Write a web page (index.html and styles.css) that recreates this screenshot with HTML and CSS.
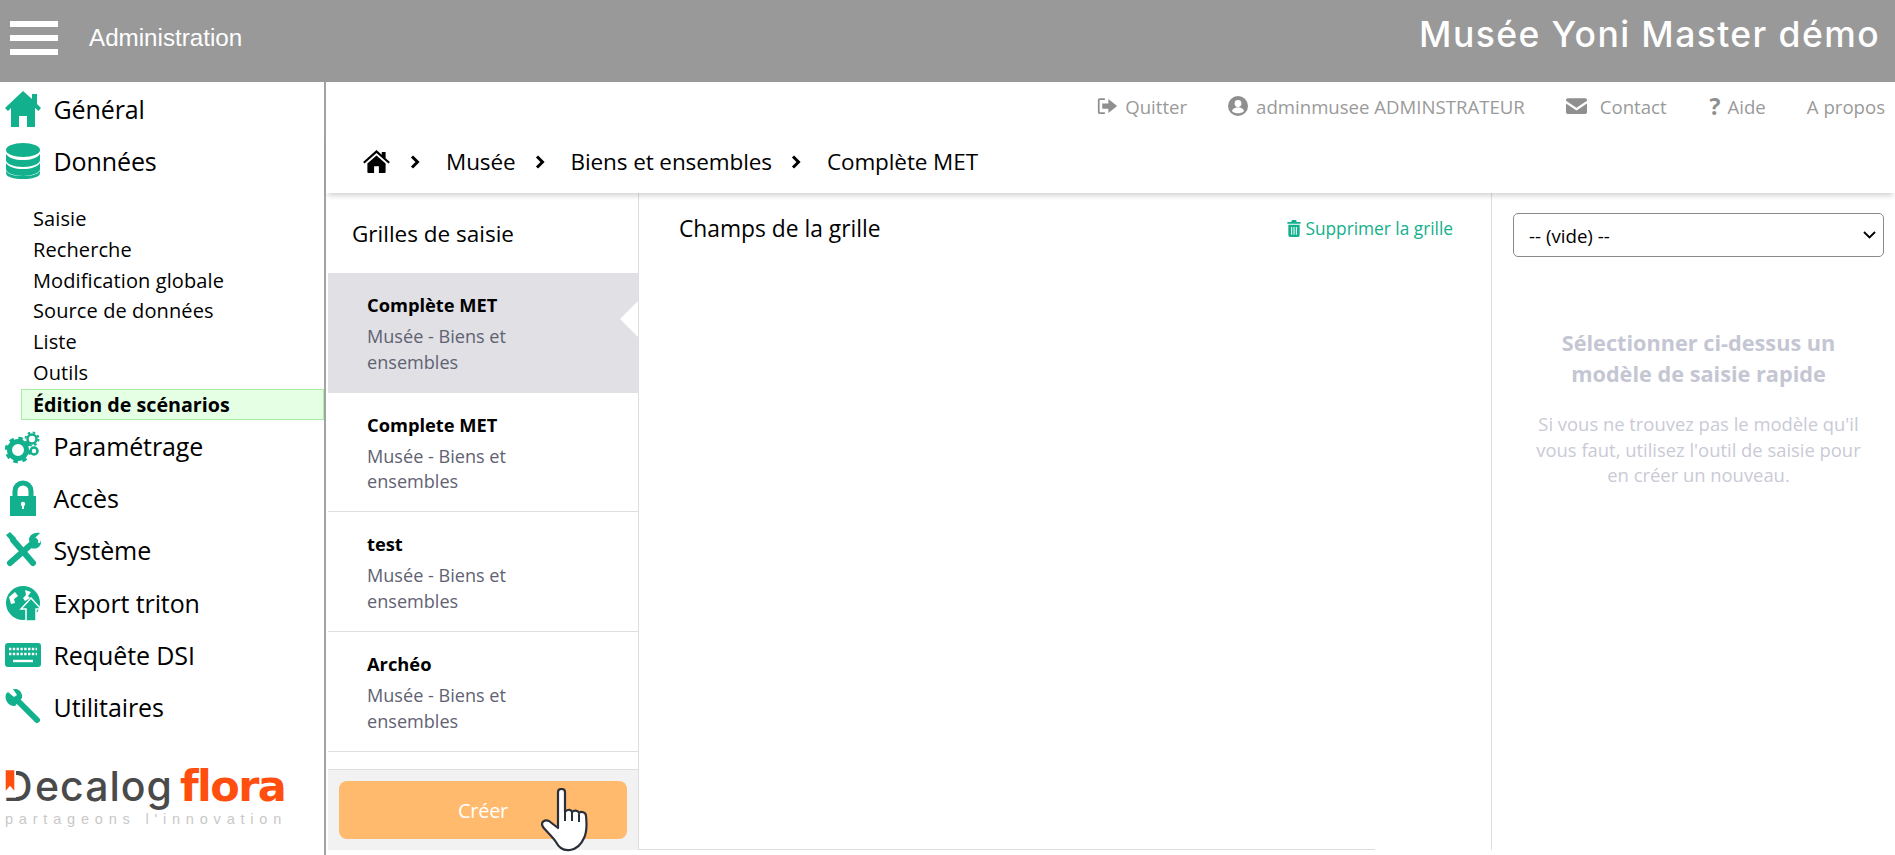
FILE: index.html
```html
<!DOCTYPE html>
<html lang="fr">
<head>
<meta charset="utf-8">
<title>Musée Yoni Master démo</title>
<link rel="stylesheet" href="styles.css">
</head>
<body>
<header class="topbar">
  <div class="burger"><span></span><span></span><span></span></div>
  <div class="admin">Administration</div>
  <div class="brand">Musée Yoni Master démo</div>
</header>
<div class="app">
  <aside class="side">
    <nav class="nav">
      <a class="nav-item"><svg class="ni" viewBox="0 0 36 36"><path d="M18 0l9 8V3h5v10l4 4-2.500 3L30 17v19h-8V25h-8v11H6V17l-3 3-3-3z"/></svg>Général</a>
      <a class="nav-item"><svg class="ni" viewBox="0 0 36 36"><ellipse cx="18" cy="7" rx="17" ry="7"/><path d="M1 11c3 4 9 6 17 6s14-2 17-6v6c0 4-8 7-17 7S1 21 1 17zM1 20c3 4 9 6 17 6s14-2 17-6v6c0 4-8 7-17 7S1 30 1 26z"/><path d="M1 28c3 4 9 5 17 5s14-1 17-5v2c0 4-8 6-17 6S1 34 1 30z"/></svg>Données</a>
      <ul class="sub">
        <li>Saisie</li>
        <li>Recherche</li>
        <li>Modification globale</li>
        <li>Source de données</li>
        <li>Liste</li>
        <li>Outils</li>
        <li class="on">Édition de scénarios</li>
      </ul>
      <a class="nav-item"><svg class="ni" viewBox="0 0 36 36"><circle cx="13" cy="22" r="8.500" fill="none" stroke="#12b08c" stroke-width="5"/><circle cx="13" cy="22" r="11.500" fill="none" stroke="#12b08c" stroke-width="3.500" stroke-dasharray="4.500 4.530"/><circle cx="27" cy="11" r="4.500" fill="none" stroke="#12b08c" stroke-width="2.500"/><circle cx="27" cy="11" r="6.500" fill="none" stroke="#12b08c" stroke-width="2" stroke-dasharray="2.500 2.600"/><circle cx="29" cy="23" r="3.500" fill="none" stroke="#12b08c" stroke-width="2.500"/></svg>Paramétrage</a>
      <a class="nav-item"><svg class="ni" viewBox="0 0 36 36"><path d="M10 17v-6a8 8 0 0 1 16 0v6" fill="none" stroke="#12b08c" stroke-width="5"/><path d="M5 16h26v20H5z"/><circle cx="18" cy="24" r="2.200" fill="#fff"/><path d="M17 24h2v5h-2z" fill="#fff"/></svg>Accès</a>
      <a class="nav-item"><svg class="ni" viewBox="0 0 36 36"><path d="M5 31L30 9" stroke="#12b08c" stroke-width="6" stroke-linecap="round"/><path d="M8 8l20 23" stroke="#12b08c" stroke-width="6" stroke-linecap="round"/><path d="M24 8c0-5 5-8 11-7l-5 5 1 4 4 1 1-3c1 6-4 10-10 8zM1 3l4-3 6 6-4 4z"/></svg>Système</a>
      <a class="nav-item"><svg class="ni" viewBox="0 0 36 36"><circle cx="18" cy="18" r="17"/><path d="M4 12l6-5 3 4-4 3 1 4-4 1zM20 5l6 2-3 4 2 2-5 3-2-3 3-3z" fill="#fff"/><path d="M26 13l10 11h-5v12H21V24h-5z" stroke="#fff" stroke-width="1.500"/></svg>Export triton</a>
      <a class="nav-item"><svg class="ni" viewBox="0 0 36 36"><rect y="6" width="36" height="24" rx="3"/><path d="M4 12h28M4 17h28" stroke="#fff" stroke-width="2.400" stroke-dasharray="2.400 1.400"/><path d="M8 24h20" stroke="#fff" stroke-width="2.400"/></svg>Requête DSI</a>
      <a class="nav-item"><svg class="ni" viewBox="0 0 36 36"><path d="M13 12l19 19" stroke="#12b08c" stroke-width="6" stroke-linecap="round"/><path d="M3 3l6 5 3-2-4-6c5-1 10 3 9 9l-7 8C4 18-1 11 1 5z"/></svg>Utilitaires</a>
    </nav>
    <div class="logo">
      <div class="logo-row">
        <span class="logo-d">D<svg class="logo-flag" viewBox="0 0 14 32"><path d="M0 0h14v32H0z" fill="#fff"/><path d="M2 0h10v24L7 18 2 24z" fill="#ff4e0d"/></svg></span><span class="logo-rest">ecalog</span><span class="logo-flora">flora</span>
      </div>
      <div class="logo-tag">partageons l'innovation</div>
    </div>
  </aside>

  <main class="main">
    <div class="links">
      <a class="lnk"><svg class="li" viewBox="0 0 24 20"><path d="M9 1H3a2 2 0 0 0-2 2v14a2 2 0 0 0 2 2h6v-2H3V3h6z"/><path d="M13 2l10 8-10 8v-5H6V7h7z"/></svg>Quitter</a>
      <a class="lnk"><svg class="li li-u" viewBox="0 0 20 20"><circle cx="10" cy="10" r="10"/><circle cx="10" cy="7.500" r="3.400" fill="#fff"/><path d="M4 15.200c1-3 3-4 6-4s5 1 6 4c-3.300 2.800-8.700 2.800-12 0z" fill="#fff"/></svg>adminmusee ADMINSTRATEUR</a>
      <a class="lnk lnk-c"><svg class="li li-m" viewBox="0 0 24 18"><path d="M2 0h20a2 2 0 0 1 2 2v1L12 11 0 3V2a2 2 0 0 1 2-2zM0 6l12 8 12-8v10a2 2 0 0 1-2 2H2a2 2 0 0 1-2-2z"/></svg>Contact</a>
      <a class="lnk lnk-h"><b class="qm">?</b>Aide</a>
      <a class="lnk">A propos</a>
    </div>
    <div class="crumbs">
      <svg class="c-home" viewBox="0 0 28 24"><path d="M14 0l5.500 5V2h4v6.500l4.500 4-1.500 1.700L14 3.200 1.500 14.200 0 12.500z"/><path d="M4.500 14L14 5.700 23.500 14v9a1 1 0 0 1-1 1h-6v-7h-5v7h-6a1 1 0 0 1-1-1z"/></svg>
      <svg class="c-sep" viewBox="0 0 10 14"><path d="M2 1.500L7.500 7 2 12.500" fill="none" stroke="#000" stroke-width="3"/></svg>
      <span>Musée</span>
      <svg class="c-sep" viewBox="0 0 10 14"><path d="M2 1.500L7.500 7 2 12.500" fill="none" stroke="#000" stroke-width="3"/></svg>
      <span>Biens et ensembles</span>
      <svg class="c-sep" viewBox="0 0 10 14"><path d="M2 1.500L7.500 7 2 12.500" fill="none" stroke="#000" stroke-width="3"/></svg>
      <span>Complète MET</span>
    </div>
    <div class="content">
      <section class="grids">
        <h2 class="grids-title">Grilles de saisie</h2>
        <div class="gitem active"><b>Complète MET</b><p>Musée - Biens et ensembles</p></div>
        <div class="gitem"><b>Complete MET</b><p>Musée - Biens et ensembles</p></div>
        <div class="gitem"><b>test</b><p>Musée - Biens et ensembles</p></div>
        <div class="gitem"><b>Archéo</b><p>Musée - Biens et ensembles</p></div>
        <div class="gfoot">
          <button class="create">Créer</button>
          <svg class="hand" viewBox="0 0 50 64"><path d="M17 4c0-4 7-4 7 0v20c2-3 6-3 7 0 2-2 6-2 7 1 2-2 7-1 7 3 1 9 1 16-2 22-3 7-7 11-14 12-7 1-11-2-14-8-3-5-10-11-13-15-3-5 2-8 6-6l9 7z" fill="#fff" stroke="#2b2f3a" stroke-width="2.200" stroke-linejoin="round"/><path d="M24 24v9M31 24v9M38 26v8" stroke="#2b2f3a" stroke-width="2"/></svg>
        </div>
      </section>
      <section class="center">
        <div class="center-head">
          <h2 class="center-title">Champs de la grille</h2>
          <a class="del"><svg class="trash" viewBox="0 0 14 18"><path d="M5 0h4l1 2h4v2H0V2h4zM1 5h12v11a2 2 0 0 1-2 2H3a2 2 0 0 1-2-2z"/><path d="M4.500 7.500v8M7 7.500v8M9.500 7.500v8" stroke="#fff" stroke-width="1.100"/></svg>Supprimer la grille</a>
        </div>
        <div class="center-foot"></div>
      </section>
      <section class="right">
        <select class="sel"><option>-- (vide) --</option></select>
        <h3 class="r-title">Sélectionner ci-dessus un modèle de saisie rapide</h3>
        <p class="r-text">Si vous ne trouvez pas le modèle qu'il vous faut, utilisez l'outil de saisie pour en créer un nouveau.</p>
      </section>
    </div>
  </main>
</div>
</body>
</html>
```
FILE: styles.css
```css
* { box-sizing: border-box; }
html, body { margin: 0; height: 100%; overflow: hidden; }
body { font-family: "Open Sans", "Noto Sans", sans-serif; color: #000; background: #fff; display: flex; flex-direction: column; height: 855px; }
h2, h3, p, ul { margin: 0; padding: 0; font-weight: normal; }

.topbar { height: 82px; background: #999; display: flex; align-items: center; color: #fff; flex: none; padding-bottom: 6px; }
.burger { width: 48px; margin-left: 10px; display: flex; flex-direction: column; gap: 8px; }
.burger span { height: 6px; background: #fff; }
.admin { font-family: "Liberation Sans", sans-serif; font-size: 24.200px; margin-left: 31px; }
.brand { margin-left: auto; margin-right: 15px; font-family: "Inter", sans-serif; font-weight: 500; font-size: 35.500px; letter-spacing: 1.400px; position: relative; top: -3.500px; }

.app { flex: 1; display: flex; min-height: 0; }
.side { width: 326px; border-right: 2px solid #a3a3a3; flex: none; padding-top: 1px; display: flex; flex-direction: column; }
.nav-item { display: flex; align-items: center; height: 52.300px; font-size: 25px; letter-spacing: -.1px; }
.ni { width: 36px; height: 36px; margin-left: 5px; margin-right: 12.500px; fill: #12b08c; flex: none; }
.sub { list-style: none; padding: 16.400px 0 0 21px; }
.sub li { height: 30.800px; line-height: 30.800px; padding-left: 12px; font-size: 20px; letter-spacing: .1px; }
.sub li.on { font-weight: 700; font-size: 19.700px; letter-spacing: 0; background: #e5ffe5; border: 1px solid #a8eea8; padding-left: 11px; line-height: 29px; }

.logo { margin: 31px 0 0 3px; width: 284px; }
.logo-row { display: flex; align-items: baseline; height: 44px; line-height: 44px; }
.logo-d { position: relative; font-family: "Inter", sans-serif; font-size: 41px; color: #4a4a4a; font-weight: 500; width: 32px; display: inline-block; }
.logo-flag { position: absolute; left: 1px; top: 6px; width: 12px; height: 28px; }
.logo-rest { font-family: "Inter", sans-serif; font-weight: 500; font-size: 41px; color: #4a4a4a; letter-spacing: 1px; }
.logo-flora { font-family: "DejaVu Sans", sans-serif; font-weight: 700; font-size: 43px; color: #ff4e0d; margin-left: 7px; letter-spacing: -1.600px; }
.logo-tag { font-family: "Liberation Sans", sans-serif; font-size: 14.500px; color: #c8c8c8; letter-spacing: 5.800px; margin: 3px 0 0 2px; white-space: nowrap; }

.main { flex: 1; display: flex; flex-direction: column; min-width: 0; }
.links { height: 50px; display: flex; justify-content: flex-end; align-items: center; padding: 0 10px 2px 0; color: #9a9a9a; font-size: 18.600px; flex: none; }
.lnk { display: flex; align-items: center; margin-left: 41px; white-space: nowrap; }
.lnk-h { margin-left: 43px; }
.li { width: 21px; height: 18px; fill: #8f8f8f; margin-right: 7px; }
.li-u { width: 20px; height: 20px; margin-right: 8px; }
.li-m { width: 21px; height: 16px; margin-right: 13px; }
.qm { font-size: 23px; color: #8f8f8f; margin-right: 7px; }
.crumbs { height: 61px; display: flex; align-items: center; padding: 0 0 2px 37px; font-size: 22.500px; letter-spacing: -.1px; box-shadow: 0 5px 5px -2px rgba(0,0,0,.16); flex: none; position: relative; z-index: 1; }
.crumbs svg { flex: none; }
.c-home { width: 27px; height: 23px; margin-right: 19px; fill: #000; }
.c-sep { width: 12px; height: 14px; margin-right: 25px; }
.crumbs span { margin-right: 18px; }

.content { flex: 1; display: flex; min-height: 0; height: 662px; padding-bottom: 5px; }
.grids { width: 311px; margin-left: 2px; border-right: 1px solid #dedede; display: flex; flex-direction: column; flex: none; }
.grids-title { height: 80px; padding: 27px 0 0 24px; font-size: 22.500px; line-height: 28px; }
.gitem { height: 119.700px; padding: 19px 100px 0 39px; border-bottom: 1px solid #dedede; position: relative; }
.gitem b { display: block; font-size: 18.300px; line-height: 26px; font-weight: 700; }
.gitem p { font-size: 18.100px; line-height: 25.500px; color: #5f6272; margin-top: 6px; }
.gitem.active { background: #e0e0e5; border-bottom: none; }
.gitem.active::after { content: ""; position: absolute; right: 0; top: 28px; border: 9px solid transparent; border-width: 18px 18px 18px 0; border-right-color: #fff; }
.gfoot { margin-top: auto; height: 81px; background: #f2f2f2; border-top: 1px solid #dedede; padding: 11px; position: relative; }
.create { display: block; width: 100%; height: 58px; border: 0; border-radius: 8px; background: #ffba6e; color: #fff; font: 20px "Open Sans", sans-serif; letter-spacing: -.3px; }
.hand { position: absolute; left: 212px; top: 18px; width: 52px; height: 64px; }

.center { flex: 1; display: flex; flex-direction: column; min-width: 0; }
.center-head { display: flex; justify-content: space-between; padding: 22px 38px 0 40px; align-items: center; }
.center-title { font-size: 22.800px; line-height: 28px; }
.del { color: #12b08c; font-size: 17.300px; display: flex; align-items: center; margin-bottom: 2px; }
.trash { width: 14px; height: 17px; fill: #12b08c; margin-right: 4px; }
.center-foot { margin-top: auto; width: 736px; border-top: 1px solid #dedede; height: 1px; }

.right { width: 404px; border-left: 1px solid #dedede; flex: none; padding: 20px 11px 0 21px; text-align: center; }
.sel { display: block; width: 371px; height: 44px; border: 1px solid #8a8a8a; border-radius: 5px; font: 18.700px "Open Sans", sans-serif; padding-left: 15px; color: #000; appearance: none; background: #fff url("data:image/svg+xml,%3Csvg xmlns='http://www.w3.org/2000/svg' viewBox='0 0 13 8'%3E%3Cpath d='M1 1l5.500 5.500L12 1' fill='none' stroke='%23000' stroke-width='1.800'/%3E%3C/svg%3E") no-repeat right 7px center / 13px 8px; }
.r-title { font-size: 21.700px; font-weight: 700; color: #c5c6d3; line-height: 31px; margin: 70px 0 0; padding: 0 30px; }
.r-text { font-size: 18.400px; line-height: 25.500px; color: #cacad6; margin-top: 22px; padding: 0 15px; }
```
